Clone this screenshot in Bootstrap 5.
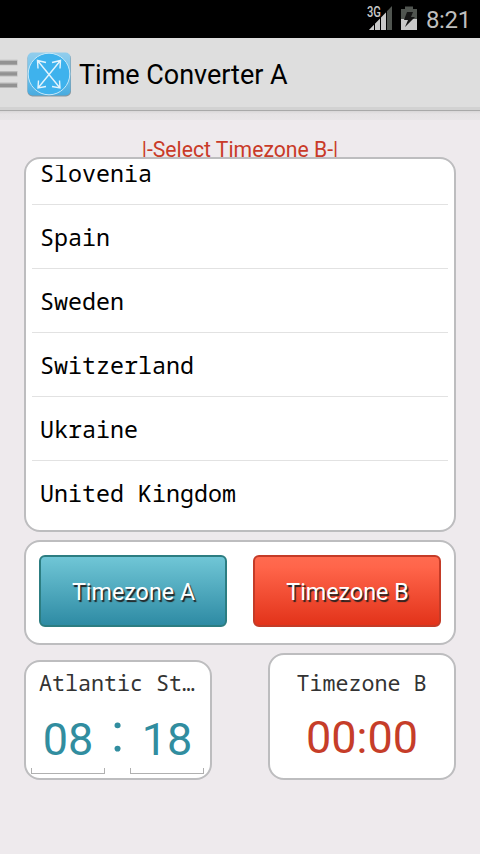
<!DOCTYPE html>
<html lang="en">
<head>
<meta charset="utf-8">
<meta name="viewport" content="width=device-width, initial-scale=1">
<title>Time Converter A</title>
<link href="https://cdn.jsdelivr.net/npm/bootstrap@5.3.0/dist/css/bootstrap.min.css" rel="stylesheet">
<style>
body{background:#eeeaed;font-family:Roboto,sans-serif;height:854px;overflow:hidden;color:#000}
.statusbar{height:38px;background:#000;color:#bebebe}
.clock{font-size:24px;line-height:40px;letter-spacing:-.3px;margin-right:9px}
.appbar{height:73px;background:#dedede;border-bottom:1px solid #a9a9a9;box-shadow:inset 0 -3px #d2d2d2}
.app-title{font-size:27px;line-height:36px;letter-spacing:-.02px;padding-top:2px;margin-left:7px}
.shade{height:9px;background:linear-gradient(#d9d7d8,#e6e3e5 35%,#e8e5e7)}
.prompt{color:#c93a28;font-size:21.2px;line-height:26px;height:20px;margin-top:17px;white-space:nowrap}
.panel{background:#fff;border:2px solid #bdbdbf;border-radius:16px}
.mono{font-family:"Droid Sans Mono","Noto Sans Mono","DejaVu Sans Mono",monospace}
.zones{height:375px;padding:6px;overflow:hidden}
.zones-view{height:359px;overflow:hidden}
.zones .list-group{margin-top:-24px}
.zones .list-group-item{height:64px;padding:0 8px;line-height:65px;font-size:23.33px;color:#000;border:0;border-bottom:1px solid #e2e2e2;border-radius:0;background:none}
.zones .list-group-item:last-child{border:0}
.switches{height:105px;margin-top:8px;padding:13px}
.zone-btn{width:188px;height:72px;border-width:2px;border-radius:6px;color:#fff;font-size:23.3px;line-height:70px;padding:0 0 0 1px;text-shadow:1.5px 1.5px 1px #222}
.zone-btn.tz-a{background:linear-gradient(#70c6d6,#2e8ba4);border-color:#2c7d81}
.zone-btn.tz-b{background:linear-gradient(#ff6a4f,#ff654a 15%,#e2331a);border-color:#c43b27}
.readout{width:188px}
.readout-a{height:120px;margin-top:7px}
.readout-b{height:127px}
.readout-label{font-size:21.67px;line-height:30px;color:#333;white-space:nowrap}
.readout-a .readout-label{padding:6px 2px 14px 0}
.readout-b .readout-label{padding:13px 1px 14px 0}
.digits{font-size:45px;line-height:52px}
.readout-a .digits{padding-left:5px}
.teal{color:#318d9f}
.red{color:#c63d29}
.field{width:74px;height:63px;line-height:56px}
.field::after{content:"";display:block;height:6px;border:1px solid #b0b0b0;border-top:0}
.colon{width:25px;font-size:54px;line-height:42px;display:flex;justify-content:center}
</style>
</head>
<body>
<header>
  <div class="statusbar d-flex justify-content-end">
    <svg width="56" height="38" viewBox="366 0 56 38">
      <path d="M369 30 392 6V30Z" fill="#505550"/>
      <path d="M369 30 386 12.500V30Z" fill="#c9c9c9"/>
      <path d="M374.500 20V31M380.500 16V31M386.500 11V31" stroke="#000" stroke-width="1"/>
      <path d="M366 5H381V18H366Z" fill="#000"/>
      <text x="367" y="17" font-family="Roboto,sans-serif" font-size="14.500" font-weight="500" fill="#c9c9c9" textLength="14" lengthAdjust="spacingAndGlyphs">3G</text>
      <path d="M401 9H405V6.500H413V9H417V19H401Z" fill="#505550"/>
      <path d="M401 19H417V30H401Z" fill="#c9c9c9"/>
      <path d="M407 12H413L411 17H415L405 27L408 20H404Z" fill="#151515"/>
    </svg>
    <span class="clock ms-1">8:21</span>
  </div>
  <nav class="appbar d-flex align-items-center">
    <svg width="72" height="48" viewBox="0 50 72 48">
      <defs>
        <linearGradient id="tile" x1="0" y1="0" x2="0" y2="1"><stop offset="0" stop-color="#92cdec"/><stop offset=".5" stop-color="#6fc2ec"/><stop offset="1" stop-color="#48abdf"/></linearGradient>
      </defs>
      <path d="M0 62.500H17.500M0 73.700H17.500M0 85.200H17.500" stroke="#b9b9b9" stroke-width="5.500"/>
      <path d="M0 62.700H17M0 73.900H17M0 85.400H17" stroke="#929292" stroke-width="3.400"/>
      <rect x="27.500" y="53.500" width="43.500" height="43" rx="5" fill="#8b969c"/>
      <rect x="27.500" y="52.500" width="43" height="43" rx="5" fill="url(#tile)"/>
      <circle cx="49" cy="74" r="20.800" fill="#3eb2ed" stroke="#c7e8f8" stroke-width="1"/>
      <path d="M37.500 60.500 60 88M60.500 60.500 38 88M38 68.500 37.500 60.500 46 62.500M52 62.500 60.500 60.500 60 68.500M38.500 80.500 38 88 46 86.500M52 86.500 60 88 59.500 80.500" fill="none" stroke="#e3f4fd" stroke-width="1.400"/>
    </svg>
    <span class="app-title">Time Converter A</span>
  </nav>
  <div class="shade"></div>
</header>
<main class="px-4">
  <div class="prompt text-center">|-Select Timezone B-|</div>
  <section class="panel zones mono position-relative">
    <div class="zones-view">
      <ul class="list-group">
        <li class="list-group-item">Slovenia</li>
        <li class="list-group-item">Spain</li>
        <li class="list-group-item">Sweden</li>
        <li class="list-group-item">Switzerland</li>
        <li class="list-group-item">Ukraine</li>
        <li class="list-group-item">United Kingdom</li>
      </ul>
    </div>
  </section>
  <section class="panel switches d-flex justify-content-between">
    <button type="button" class="btn zone-btn tz-a">Timezone A</button>
    <button type="button" class="btn zone-btn tz-b">Timezone B</button>
  </section>
  <div class="d-flex justify-content-between align-items-start mt-2">
    <section class="panel readout readout-a">
      <div class="readout-label mono text-center">Atlantic St…</div>
      <div class="d-flex digits teal">
        <div class="field text-center">08</div>
        <div class="colon">:</div>
        <div class="field text-center">18</div>
      </div>
    </section>
    <section class="panel readout readout-b text-center">
      <div class="readout-label mono">Timezone B</div>
      <div class="digits red">00:00</div>
    </section>
  </div>
</main>
<script src="https://cdn.jsdelivr.net/npm/bootstrap@5.3.0/dist/js/bootstrap.bundle.min.js"></script>
</body>
</html>
